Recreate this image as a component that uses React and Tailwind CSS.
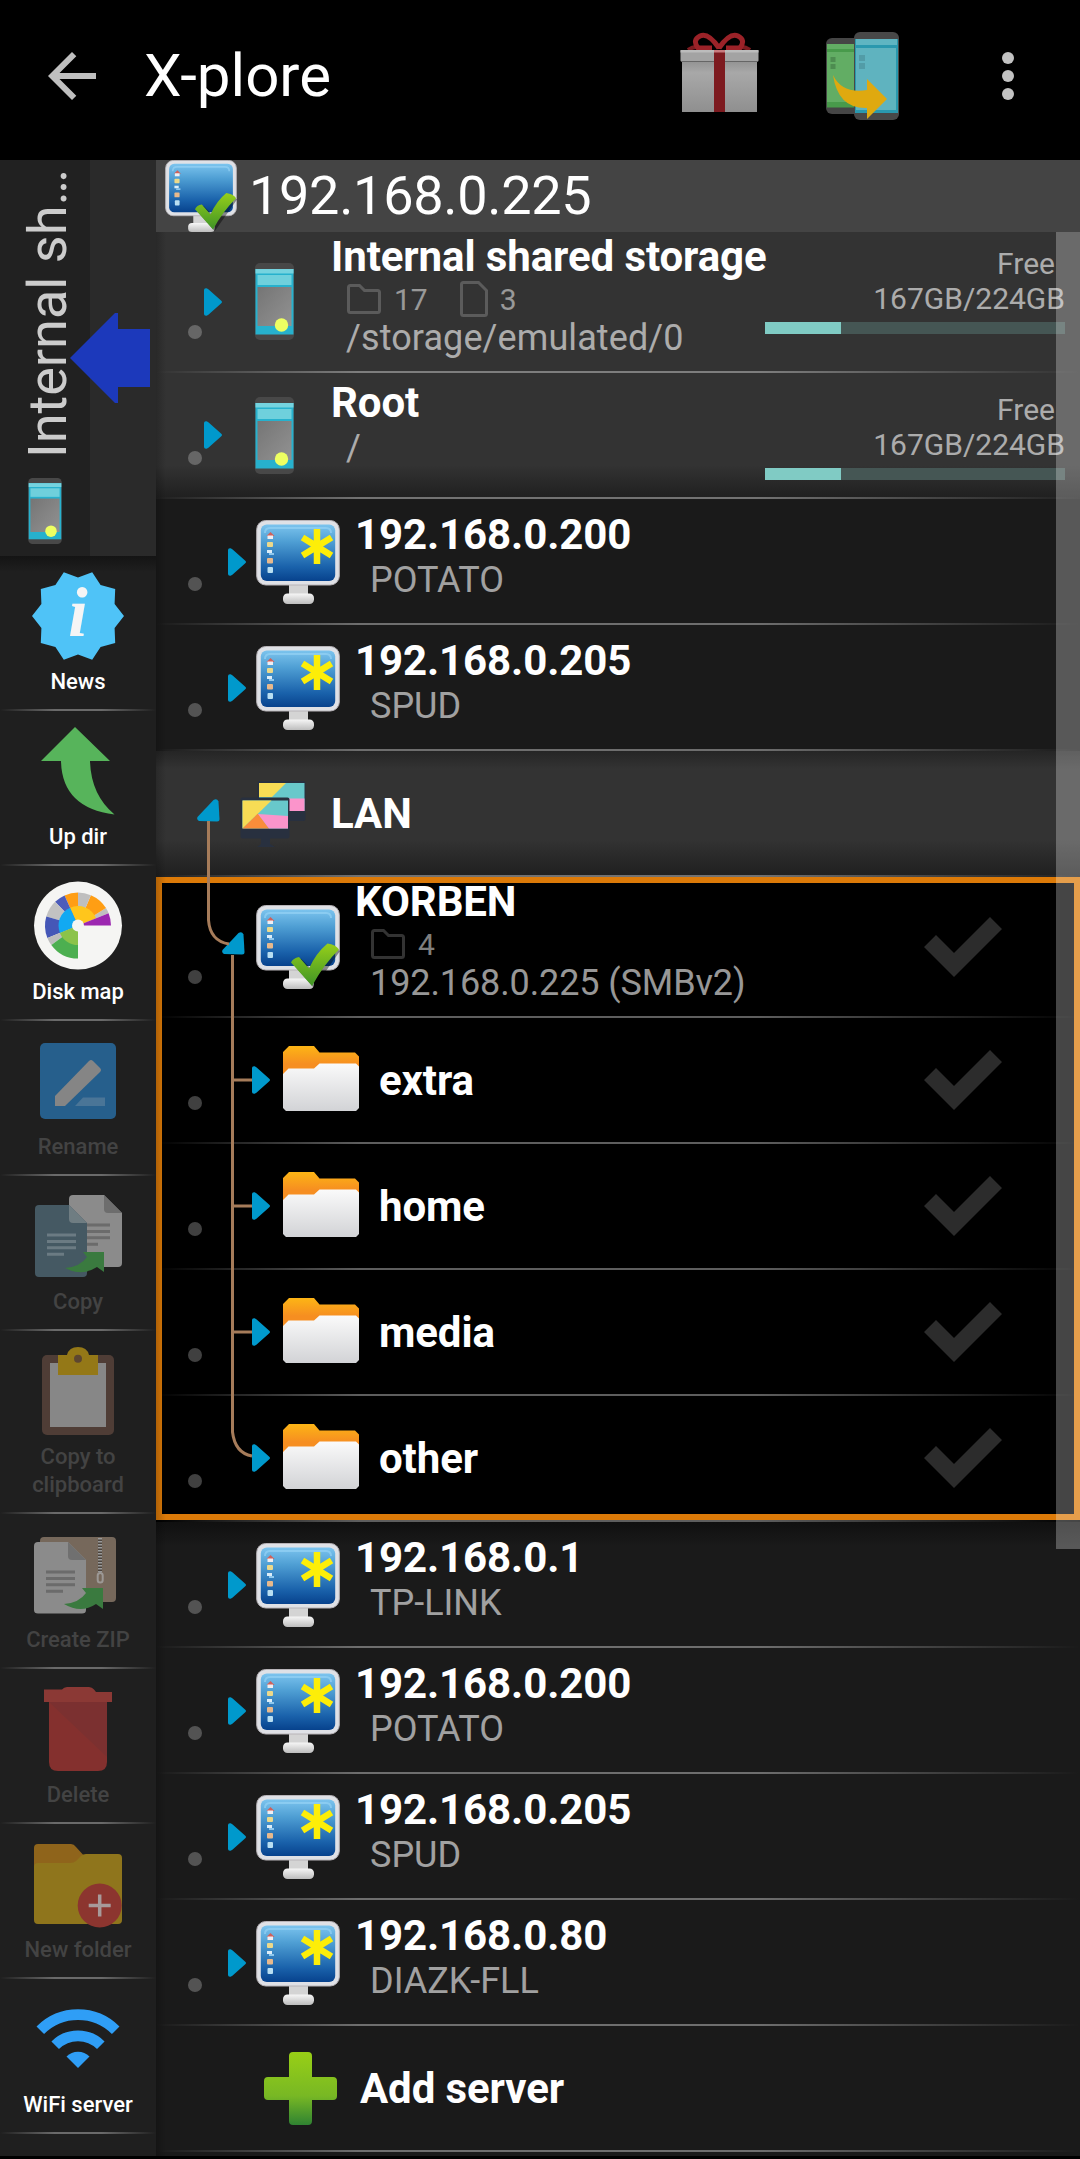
import React from "react";

const Monitor = ({ className, check }) => (
  <svg viewBox="0 0 84 84" className={className}>
    <defs>
      <linearGradient id="scr" x1="0" y1="0" x2="0" y2="1">
        <stop offset="0" stopColor="#7cc4ee" />
        <stop offset="0.3" stopColor="#4f9fd4" />
        <stop offset="0.75" stopColor="#1a62ab" />
        <stop offset="1" stopColor="#07428d" />
      </linearGradient>
      <linearGradient id="stand" x1="0" y1="0" x2="0" y2="1">
        <stop offset="0" stopColor="#f6f6f6" />
        <stop offset="1" stopColor="#bdbdbd" />
      </linearGradient>
      <linearGradient id="chk" x1="0" y1="0" x2="0" y2="1">
        <stop offset="0" stopColor="#96cf1a" />
        <stop offset="1" stopColor="#3f9426" />
      </linearGradient>
    </defs>
    <rect x="33" y="62" width="19" height="14" fill="#d4d4d4" />
    <rect x="27" y="73.500" width="31" height="10.500" rx="4.500" fill="url(#stand)" />
    <rect x="0.700" y="0.500" width="82.600" height="64.500" rx="9" fill="#dfe1e6" stroke="#b8b4b8" strokeWidth="1" />
    <rect x="4.800" y="4.500" width="74.400" height="56.500" rx="6" fill="url(#scr)" />
    <path d="M9 13q0-5 5-5h56q5 0 5 5" fill="none" stroke="#9bd6f6" strokeWidth="2" opacity="0.600" />
    <path d="M10.500 16l4-4 4 4z" fill="#d0605a" />
    <rect x="11.500" y="15.500" width="5.500" height="3.500" fill="#f0eef2" />
    <rect x="11" y="22" width="6" height="5" rx="1" fill="#ecd98a" />
    <rect x="11" y="30" width="5" height="3" fill="#dcedf8" />
    <rect x="13" y="33" width="5" height="2" fill="#8ec8ee" />
    <rect x="11" y="38" width="6" height="5.500" rx="1" fill="#e8b98c" />
    <rect x="11.500" y="47" width="5.500" height="6" rx="1" fill="#b9dff2" />
    {check ? (
      <>
        <path d="M38 60l7-6.500 10.500 11 17.500-25 11 6.500-26 37z" fill="#000" opacity="0.400" />
        <path d="M35 57.500q2-4.500 8-5.500 3 3.500 10 11.500Q60 48 71.500 38.500q8 1 11.500 6Q68 59 56 81z" fill="url(#chk)" />
      </>
    ) : (
      <path d="M61 9v35M46.500 17.500l29 18M75.500 17.500l-29 18" stroke="#fdee08" strokeWidth="6.500" fill="none" />
    )}
  </svg>
);

const Phone = ({ className }) => (
  <svg viewBox="0 0 39 77" className={className}>
    <defs>
      <linearGradient id="ph" x1="0" y1="0" x2="1" y2="1">
        <stop offset="0" stopColor="#757575" />
        <stop offset="1" stopColor="#929292" />
      </linearGradient>
    </defs>
    <rect width="39" height="77" rx="5" fill="#484848" />
    <rect x="0.500" y="6" width="38" height="65.500" fill="#27b1cd" />
    <rect x="0.500" y="6" width="38" height="4.500" fill="#75d3df" />
    <rect x="2.500" y="12" width="34" height="10" fill="#6fd0dc" />
    <rect x="2.500" y="24" width="34" height="39" fill="url(#ph)" />
    <circle cx="26.500" cy="62" r="6.700" fill="#eeff62" />
  </svg>
);

const Folder = ({ className }) => (
  <svg viewBox="0 0 76 65" className={className}>
    <defs>
      <linearGradient id="fo" x1="0" y1="0" x2="0" y2="1">
        <stop offset="0" stopColor="#fdb515" />
        <stop offset="0.450" stopColor="#f68e21" />
      </linearGradient>
      <linearGradient id="fw" x1="0" y1="0" x2="0" y2="1">
        <stop offset="0" stopColor="#fafafa" />
        <stop offset="1" stopColor="#d2d3d6" />
      </linearGradient>
    </defs>
    <path d="M0 6L6 0h25l5.500 6.500H72l4 4V40H0z" fill="url(#fo)" />
    <path d="M0 28l5.500-5.500H31l5.500-5H73l3 3V62l-3 3H3l-3-3z" fill="url(#fw)" />
  </svg>
);

const Lan = () => (
  <svg viewBox="0 0 68 68" className="h-[68px] w-[68px]">
    <rect x="17.500" y="1" width="48" height="40" rx="2" fill="#28303f" />
    <rect x="19" y="3" width="45.500" height="28" fill="#68c8cb" />
    <path d="M19 3h27L32 17H19z" fill="#f7dc55" />
    <rect x="49" y="18.500" width="15.500" height="12.500" fill="#fb94cb" />
    <rect x="0.500" y="17.500" width="49" height="41" rx="2" fill="#28303f" />
    <rect x="2.500" y="20.500" width="45.500" height="28" fill="#68c8cb" />
    <path d="M2.500 20.500h29L2.500 48.500z" fill="#f7dc55" />
    <path d="M2.500 48.500L18 33.500l11 15z" fill="#fa8d3a" />
    <path d="M18 34l30 2v12.500H29z" fill="#fb94cb" />
    <path d="M21 58h9v6l5 3H17l4-3z" fill="#28303f" />
  </svg>
);

const Plus = () => (
  <svg viewBox="0 0 73 73" className="h-[73px] w-[73px]">
    <defs>
      <linearGradient id="pl" x1="0" y1="0" x2="0" y2="1">
        <stop offset="0" stopColor="#98cf16" />
        <stop offset="0.600" stopColor="#78b824" />
        <stop offset="1" stopColor="#2f8332" />
      </linearGradient>
    </defs>
    <path
      d="M25 4q0-4 4-4h15q4 0 4 4v21h21q4 0 4 4v15q0 4-4 4H48v21q0 4-4 4H29q-4 0-4-4V48H4q-4 0-4-4V29q0-4 4-4h21z"
      fill="url(#pl)"
    />
  </svg>
);

const Arrow = ({ className }) => (
  <svg viewBox="0 0 18 28" className={`h-[28px] w-[18px] shrink-0 ${className}`}>
    <path d="M0 2Q0 0 2.500 0.300q1.500.3 3 2L17 12.500q2 1.500 0 3L5.500 25.700q-1.500 1.700-3 2Q0 28 0 26z" fill="#0099cc" />
  </svg>
);

const Collapse = ({ className }) => (
  <svg viewBox="0 0 23 23" className={`h-[23px] w-[23px] shrink-0 ${className}`}>
    <path d="M0.500 18L16.500 1q3.500-2 5 1.500L22.500 20q0 2.500-2.500 2.500L2 22Q-.5 21 .5 18z" fill="#0099cc" />
  </svg>
);

const SmallFolder = () => (
  <svg viewBox="0 0 34 30" className="h-[30px] w-[34px]">
    <path d="M3.500 1.500h9L17.500 6.500H30.500q2 0 2 2v18q0 2-2 2h-27q-2 0-2-2v-23q0-2 2-2z" fill="none" stroke="#fff" strokeOpacity="0.200" strokeWidth="3" />
  </svg>
);

const SmallFile = () => (
  <svg viewBox="0 0 28 36" className="h-[36px] w-[28px]">
    <path d="M3.500 1.500H18.500L26.500 9.500V32.500q0 2-2 2h-21q-2 0-2-2v-29q0-2 2-2z" fill="none" stroke="#fff" strokeOpacity="0.200" strokeWidth="3" />
  </svg>
);

const Check = () => (
  <svg viewBox="0 0 78 60" className="mr-[78px] ml-auto h-[60px] w-[78px] self-center">
    <path d="M0 30l12-12 18 18L66 0l12 12-48 48z" fill="#2c2c2c" />
  </svg>
);

const Line = () => (
  <div className="h-[2px] shrink-0 bg-[linear-gradient(90deg,transparent,rgba(255,255,255,0.37)_22%,rgba(255,255,255,0.37)_65%,transparent)]" />
);

const Dot = ({ hidden }) => (
  <div className={`mb-[32px] ml-8 h-[14px] w-[14px] shrink-0 self-end rounded-full ${hidden ? "" : "bg-white/25"}`} />
);

const Row = ({ tall, noDot, className = "", children }) => (
  <div className={`flex shrink-0 flex-col ${tall ? "h-[141px]" : "h-[126px]"} ${className}`}>
    <div className="flex min-h-0 flex-1 items-center">
      <Dot hidden={noDot} />
      {children}
    </div>
    <Line />
  </div>
);

const Title = ({ children }) => (
  <div className="text-[42px] leading-[49px] font-bold tracking-[-0.1px] whitespace-nowrap text-white">{children}</div>
);
const Sub = ({ className = "", children }) => (
  <div className={`ml-[15px] text-[36px] leading-[42px] whitespace-nowrap text-white/60 ${className}`}>{children}</div>
);

const Free = ({ className }) => (
  <div className={`mr-[15px] ml-auto flex w-[300px] flex-col items-end text-[30px] leading-[35px] text-white/60 ${className}`}>
    <div className="mr-[10px]">Free</div>
    <div>167GB/224GB</div>
    <div className="mt-[6px] h-[12px] w-full bg-[#455654]">
      <div className="h-full w-[76px] bg-[#80cbc4]" />
    </div>
  </div>
);

const Server = ({ ip, name, className }) => (
  <Row className={className}>
    <Arrow className="mt-[2px] ml-[26px]" />
    <Monitor className="mt-[2px] ml-[10px] h-[84px] w-[84px] shrink-0" />
    <div className="mt-[11px] ml-[15px] self-start">
      <Title>{ip}</Title>
      <Sub>{name}</Sub>
    </div>
  </Row>
);

const Dir = ({ name }) => (
  <Row>
    <Arrow className="ml-[50px]" />
    <Folder className="-mt-[4px] ml-[13px] h-[65px] w-[76px] shrink-0" />
    <div className="ml-[20px]">
      <Title>{name}</Title>
    </div>
    <Check />
  </Row>
);

/* ---- side bar icons, all on a 92 x 92 field ---- */
const star = Array.from({ length: 20 }, (_, i) => {
  const a = (i * 18 * Math.PI) / 180;
  const r = i % 2 ? 38.5 : 46;
  return `${(46 + r * Math.cos(a)).toFixed(1)},${(45 + r * Math.sin(a)).toFixed(1)}`;
}).join(" ");

const wedge = (r, a, b) => {
  const p = (t) => `${(46 + r * Math.cos((t * Math.PI) / 180)).toFixed(2)} ${(44.6 - r * Math.sin((t * Math.PI) / 180)).toFixed(2)}`;
  return `M46 44.600L${p(a)}A${r} ${r} 0 0 0 ${p(b)}z`;
};
const segments = [
  [33, 22, 32, "#c0c0c0"],
  [33, 32, 67, "#ff9e14"],
  [33, 67, 90, "#bfbfbf"],
  [33, 90, 114, "#ff9e14"],
  [33, 114, 134, "#4c5cba"],
  [33, 134, 164, "#c2c2c2"],
  [33, 164, 202, "#4557b7"],
  [33, 202, 216, "#bdbdbd"],
  [33, 216, 270, "#4caf50"],
  [19.5, 22, 114, "#ffc61c"],
  [19.5, 114, 202, "#12a9f2"],
  [19.5, 202, 270, "#8bc34a"],
  [33, 0, 22, "#9c27b0"],
];

const TextLines = ({ x, y, color }) => (
  <path d={`M${x} ${y}h29M${x} ${y + 6.4}h29M${x} ${y + 12.8}h29M${x} ${y + 19.2}h17`} stroke={color} strokeWidth="3" />
);

const icons = {
  news: (
    <>
      <polygon points={star} fill="#4fc3f7" />
      <text x="46" y="65" textAnchor="middle" fontFamily="Liberation Serif" fontStyle="italic" fontWeight="700" fontSize="70" fill="#f5f5f5">
        i
      </text>
    </>
  ),
  up: <path d="M43 1l35 34H58q1 34 24.500 53.500Q30 82 29 35H9z" fill="#57b45b" />,
  disk: (
    <>
      <circle cx="46" cy="44.600" r="44" fill="#f5f5f3" />
      {segments.map(([r, a, b, c]) => (
        <path key={`${r}-${a}`} d={wedge(r, a, b)} fill={c} />
      ))}
      <circle cx="46" cy="44.600" r="6" fill="#f5f5f3" />
    </>
  ),
  rename: (
    <>
      <rect x="8" y="7" width="76" height="76" rx="5" fill="#265f8c" />
      <path d="M23 60L57 25q2-2 4 0l7 7q2 2 0 4L33 70H23z" fill="#858585" />
      <path d="M43 70l8-8.500H73V70z" fill="#4a7597" />
    </>
  ),
  copy: (
    <>
      <path d="M41 4H72L90 22V72q0 4-4 4H41q-4 0-4-4V8q0-4 4-4z" fill="#8b8b8b" />
      <path d="M72 4l18 18H76q-4 0-4-4z" fill="#6d6d6d" />
      <TextLines x={49} y={34} color="#6b6b6b" />
      <path d="M7 14H37L55 32V82q0 4-4 4H7q-4 0-4-4V18q0-4 4-4z" fill="#455963" />
      <path d="M37 14l18 18H41q-4 0-4-4z" fill="#6f7d82" />
      <TextLines x={15} y={44} color="#6b7b83" />
      <path d="M33 77q15-1 22-11l-4-5H72V81l-7-5Q50 86 33 77z" fill="#3a7a3f" />
    </>
  ),
  clip: (
    <>
      <rect x="10" y="9" width="72" height="80" rx="5" fill="#4f3d36" />
      <rect x="18" y="17" width="56" height="64" fill="#878787" />
      <path d="M26 9h9q2-8 11-8t11 8h9v20H26z" fill="#947817" />
      <circle cx="46" cy="12.700" r="4" fill="#5d4630" />
    </>
  ),
  zip: (
    <>
      <rect x="8" y="8" width="76" height="65" rx="4" fill="#76685b" />
      <path d="M68 9v36" stroke="#4c443d" strokeWidth="4" />
      <path d="M68 9v36" stroke="#999" strokeWidth="4" strokeDasharray="1.500 1.500" />
      <rect x="65.700" y="44" width="5" height="9.500" rx="2.500" fill="none" stroke="#9c9895" strokeWidth="2" />
      <path d="M6 13H36L54 31V81q0 3.500-4 3.500H6q-4 0-4-3.500V17q0-4 4-4z" fill="#8b8b8b" />
      <path d="M36 13l18 18H40q-4 0-4-4z" fill="#707070" />
      <TextLines x={14} y={43} color="#6b6b6b" />
      <path d="M32 75q15-1 22-11l-4-5H71V80l-7-5Q49 85 32 75z" fill="#3a7a3f" />
    </>
  ),
  del: (
    <>
      <path d="M17 18H75V78q0 9-9 9H26q-9 0-9-9z" fill="#84302e" />
      <path d="M17 18H75V73z" fill="#7b3030" />
      <path d="M12 5.500h18q2-2.500 5-2.500H57q3 0 5 2.500L64 8H80V18H12V8z" fill="#8b3935" />
    </>
  ),
  folder: (
    <>
      <path d="M6 5H39q3 0 5 3l10 11v20H2V9q0-4 4-4z" fill="#8f641b" />
      <path d="M6 24H38q4 0 6-2l5-5q2-2 5-2H86q4 0 4 4V81q0 4-4 4H6q-4 0-4-4V28q0-4 4-4z" fill="#8f751c" />
      <circle cx="67.700" cy="66.500" r="22" fill="#8c352f" />
      <path d="M67.700 55.500v22M56.700 66.500h22" stroke="#a79a9a" strokeWidth="3.500" />
    </>
  ),
  wifi: (
    <>
      <path d="M8.300 36.300A53.300 53.300 0 0 1 83.700 36.300M23.200 51.200A32.300 32.300 0 0 1 68.800 51.200" fill="none" stroke="#2f9ef6" strokeWidth="10.700" />
      <path d="M46 74L34.500 62.500A16.300 16.300 0 0 1 57.500 62.500z" fill="#2f9ef6" />
    </>
  ),
};

const tools = [
  ["news", "News", true],
  ["up", "Up dir", true],
  ["disk", "Disk map", true],
  ["rename", "Rename", false],
  ["copy", "Copy", false],
  ["clip", "Copy to clipboard", false],
  ["zip", "Create ZIP", false],
  ["del", "Delete", false],
  ["folder", "New folder", false],
  ["wifi", "WiFi server", true],
];

const Header = () => (
  <header className="flex h-[160px] shrink-0 items-start bg-black">
    <svg viewBox="0 0 48 48" className="mt-[52px] ml-[48px] h-[48px] w-[48px]">
      <path d="M48 21v6H11.500l16.800 16.800L24 48 0 24 24 0l4.300 4.200L11.500 21z" fill="#bfbfbf" />
    </svg>
    <h1 className="mt-[41px] ml-[48px] text-[60px] leading-[70px] text-white">X-plore</h1>
    <div className="ml-auto flex">
      <svg viewBox="0 0 80 80" className="mt-[32px] h-[80px] w-[80px]">
        <defs>
          <linearGradient id="gb" x1="0" y1="0" x2="0" y2="1">
            <stop offset="0" stopColor="#8a8a8a" />
            <stop offset="0.300" stopColor="#a8a8a8" />
            <stop offset="1" stopColor="#8f8f8f" />
          </linearGradient>
        </defs>
        <path d="M8 18q6-4 11-2.500M70 18q-6-4-11-2.500" stroke="#7c1b20" strokeWidth="4" fill="none" />
        <path d="M39 16Q28 0 20 4t-2 12h14M39 16Q50 0 58 4t2 12H46" stroke="#9b2228" strokeWidth="5" fill="none" />
        <rect x="2" y="24" width="75" height="56" fill="url(#gb)" />
        <rect x="0.500" y="18" width="78" height="11.500" rx="1" fill="#a3a3a3" />
        <rect x="0.500" y="18" width="78" height="2.500" fill="#bcbcbc" />
        <path d="M1 29.500h77" stroke="#666" strokeWidth="1" />
        <rect x="34" y="18" width="11" height="62" fill="#7d1a1f" />
        <rect x="34" y="18" width="11" height="2.500" fill="#c77a7e" />
      </svg>
      <svg viewBox="0 0 73 88" className="mt-[32px] ml-[66px] h-[88px] w-[73px]">
        <rect x="0" y="6" width="40" height="76" rx="6" fill="#454545" />
        <rect x="1" y="12" width="34" height="63" fill="#62ad64" />
        <rect x="1" y="17" width="34" height="3" fill="#489a4b" />
        <rect x="1" y="70" width="34" height="5.500" fill="#489a4b" />
        <rect x="4.500" y="25" width="5" height="5" fill="#4d8c50" />
        <rect x="4.500" y="32" width="5" height="5" fill="#4d8c50" />
        <rect x="28" y="0" width="45" height="88" rx="6" fill="#484848" />
        <rect x="29" y="7" width="43" height="74" fill="#2a98ae" />
        <rect x="30" y="7" width="41" height="6" fill="#5fb5c2" />
        <rect x="30" y="16" width="40" height="62" fill="#5fb3bf" />
        <rect x="33" y="23" width="6" height="6" fill="#529ca7" />
        <rect x="33" y="31" width="6" height="6" fill="#529ca7" />
        <path d="M7 43Q16 62 41 58V47L61 67 41 87V76Q12 77 7 43z" fill="#dfa90f" />
      </svg>
      <svg viewBox="0 0 12 48" className="mt-[52px] mr-[66px] ml-[103px] h-[48px] w-[12px]">
        <circle cx="6" cy="6" r="6" fill="#c2c2c2" />
        <circle cx="6" cy="24" r="6" fill="#c2c2c2" />
        <circle cx="6" cy="42" r="6" fill="#c2c2c2" />
      </svg>
    </div>
  </header>
);

const Sidebar = () => (
  <aside className="flex w-[156px] shrink-0 flex-col bg-[#1f1f1f]">
    <div className="flex h-[396px] shrink-0">
      <div className="flex w-[90px] flex-col items-center bg-[#212121]">
        <div className="mt-[9px] ml-[6px] h-[289px] w-[64px] rotate-180 text-[54px] leading-[64px] whitespace-nowrap text-[#cccccc] [writing-mode:vertical-rl]">
          Internal sh…
        </div>
        <Phone className="mt-[20px] h-[66px] w-[34px]" />
      </div>
      <div className="w-[66px] bg-[#2a2a2a]">
        <svg viewBox="0 0 80 90" className="relative -left-[20px] mt-[153px] h-[90px] w-[80px] max-w-none">
          <path d="M0 45L45 0h3v16h32v58H48v16h-3z" fill="#1c39bb" />
        </svg>
      </div>
    </div>
    {tools.map(([id, label, on], i) => (
      <div
        key={id}
        className={`flex shrink-0 flex-col items-center ${id === "clip" ? "h-[183px]" : "h-[155px]"} ${
          i === 0 ? "bg-[linear-gradient(180deg,#141414,#1f1f1f_16px)]" : ""
        }`}
      >
        <svg viewBox="0 0 92 92" className="mt-[15px] h-[92px] w-[92px] shrink-0">
          {icons[id]}
        </svg>
        <div className={`mt-[5px] w-[120px] flex-1 text-center text-[22px] leading-[28px] font-medium ${on ? "text-white" : "text-[#434343]"}`}>
          {label}
        </div>
        <div className="h-[2px] w-full bg-[linear-gradient(90deg,transparent,#6a6a6a_35%,#6a6a6a_65%,transparent)]" />
      </div>
    ))}
  </aside>
);

export default function App() {
  return (
    <div className="flex h-[2159px] w-[1080px] flex-col overflow-hidden bg-black font-[Roboto,sans-serif]">
      <Header />
      <div className="flex h-[1996px] shrink-0">
        <Sidebar />
        <main className="relative flex w-[924px] flex-col overflow-hidden bg-[#1a1a1a]">
          <div className="flex h-[72px] shrink-0 items-center bg-[#444444]">
            <Monitor check className="ml-[9px] h-[72px] w-[72px]" />
            <div className="ml-[12px] text-[54px] leading-[64px] tracking-[-0.3px] text-white">192.168.0.225</div>
          </div>

          <Row tall className="bg-[#333333]">
            <Arrow className="ml-[2px]" />
            <Phone className="ml-[33px] h-[77px] w-[39px] shrink-0" />
            <div className="ml-[37px] w-[397px] self-start">
              <Title>Internal shared storage</Title>
              <div className="ml-[16px] flex h-[36px] items-center text-[30px] leading-[35px] text-white/50">
                <SmallFolder />
                <span className="ml-[13px]">17</span>
                <span className="ml-[32px]">
                  <SmallFile />
                </span>
                <span className="ml-[12px]">3</span>
              </div>
              <Sub className="tracking-[0.1px]">/storage/emulated/0</Sub>
            </div>
            <Free className="mt-[14px] shrink-0 self-start" />
          </Row>
          <Row className="bg-[linear-gradient(180deg,#333333_92px,#202020_124px)]">
            <Arrow className="ml-[2px]" />
            <Phone className="ml-[33px] h-[77px] w-[39px] shrink-0" />
            <div className="mt-[5px] ml-[37px] self-start">
              <Title>Root</Title>
              <Sub>/</Sub>
            </div>
            <Free className="mt-[19px] shrink-0 self-start" />
          </Row>
          <Server ip="192.168.0.200" name="POTATO" />
          <Server ip="192.168.0.205" name="SPUD" />
          <Row noDot className="bg-[linear-gradient(180deg,#252525,#333333_18px,#333333_88px,#202020_124px)]">
            <Collapse className="-mt-[6px] -ml-[5px]" />
            <div className="mt-[2px] ml-[20px]">
              <Lan />
            </div>
            <div className="ml-[23px]">
              <Title>LAN</Title>
            </div>
          </Row>

          <section className="relative shrink-0 bg-black">
            <Row tall>
              <Collapse className="-mt-[6px] ml-[20px]" />
              <Monitor check className="ml-[11px] h-[84px] w-[84px] shrink-0" />
              <div className="ml-[15px] self-start">
                <Title>KORBEN</Title>
                <div className="ml-[16px] flex h-[36px] items-center text-[30px] leading-[35px] text-white/50">
                  <SmallFolder />
                  <span className="ml-[13px]">4</span>
                </div>
                <Sub className="tracking-[-0.1px]">192.168.0.225 (SMBv2)</Sub>
              </div>
              <Check />
            </Row>
            <Dir name="extra" />
            <Dir name="home" />
            <Dir name="media" />
            <Dir name="other" />
            <div className="absolute inset-x-0 top-0 bottom-[2px] border-[6px] border-[#dc7a08]" />
          </section>

          <Server ip="192.168.0.1" name="TP-LINK" className="bg-[linear-gradient(180deg,#101010,#1a1a1a_24px)]" />
          <Server ip="192.168.0.200" name="POTATO" />
          <Server ip="192.168.0.205" name="SPUD" />
          <Server ip="192.168.0.80" name="DIAZK-FLL" />
          <Row noDot>
            <div className="ml-[62px]">
              <Plus />
            </div>
            <div className="ml-[23px]">
              <Title>Add server</Title>
            </div>
          </Row>

          {/* connector lines drawn over the tree */}
          <svg viewBox="196 820 60 640" className="absolute top-[660px] left-[40px] h-[640px] w-[60px]">
            <path
              d="M208.500 821V920Q210 941 229 944M232.500 955V1432Q235 1453 252 1456M232.500 1080H252M232.500 1206H252M232.500 1332H252"
              fill="none"
              stroke="#a67c5a"
              strokeWidth="3"
            />
          </svg>
          <div className="absolute top-[72px] bottom-0 left-0 w-[10px] bg-gradient-to-r from-black/20 to-transparent" />
          <div className="absolute top-[72px] right-0 h-[1317px] w-[24px] bg-white/27" />
        </main>
      </div>
    </div>
  );
}
